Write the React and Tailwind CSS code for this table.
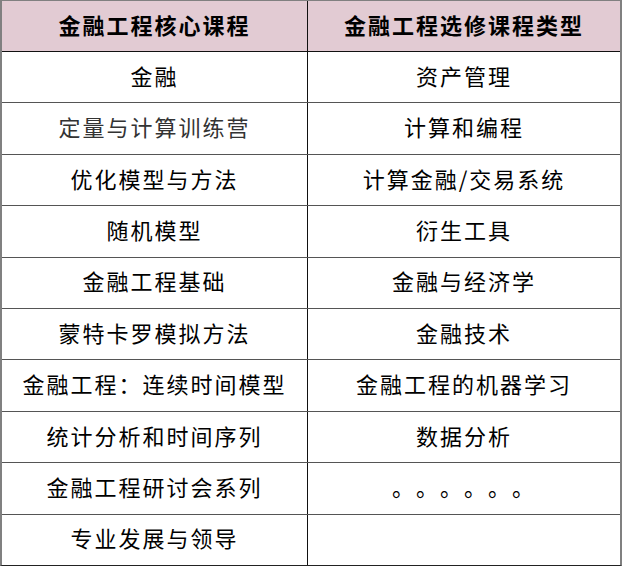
const core = [
  "金融",
  "定量与计算训练营",
  "优化模型与方法",
  "随机模型",
  "金融工程基础",
  "蒙特卡罗模拟方法",
  "金融工程：连续时间模型",
  "统计分析和时间序列",
  "金融工程研讨会系列",
  "专业发展与领导",
];
const elective = [
  "资产管理",
  "计算和编程",
  "计算金融/交易系统",
  "衍生工具",
  "金融与经济学",
  "金融技术",
  "金融工程的机器学习",
  "数据分析",
  "。。。。。。",
  "",
];

export default function App() {
  return (
    <div
      className="w-[622px] h-[566px] bg-white overflow-hidden [text-spacing-trim:space-all]"
      style={{ fontFamily: '"Noto Sans CJK SC", "Noto Sans", sans-serif' }}
    >
      <div className="w-full h-full border-l-2 border-r-2 border-t border-b border-l-[#808080] border-r-[#808080] border-t-[#808080] border-b-[#222] flex flex-col">
        <div className="flex h-[51px] bg-[#e2cbd3] border-b border-[#111] shrink-0">
          <div className="w-[306px] border-r border-[#111] flex items-center justify-center pb-[4px] text-[22px] font-bold tracking-[2px] text-black">
            金融工程核心课程
          </div>
          <div className="flex-1 flex items-center justify-center pb-[4px] text-[22px] font-bold tracking-[2px] text-black">
            金融工程选修课程类型
          </div>
        </div>
        {core.map((c, i) => (
          <div
            key={i}
            className={
              "flex flex-1 " + (i < core.length - 1 ? "border-b border-[#555]" : "")
            }
          >
            <div
              className={
                "w-[306px] border-r border-[#111] flex items-center justify-center pb-[4px] text-[22px] tracking-[2px] " +
                (i === 1 ? "text-[#333]" : "text-black")
              }
            >
              {c}
            </div>
            <div className="flex-1 flex items-center justify-center pb-[4px] text-[22px] tracking-[2px] text-black">
              {elective[i]}
            </div>
          </div>
        ))}
      </div>
    </div>
  );
}
